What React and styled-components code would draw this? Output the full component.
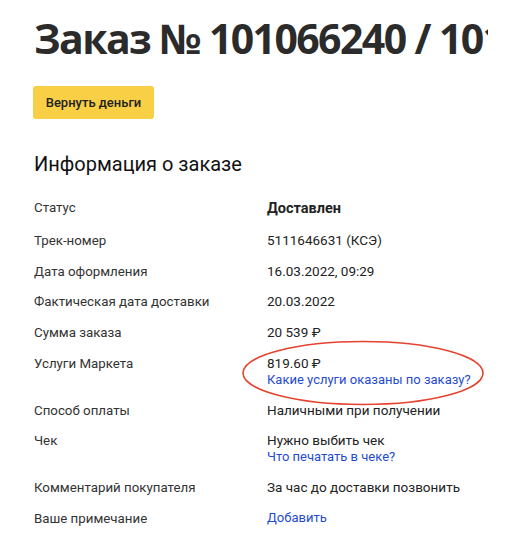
import styled, { createGlobalStyle } from 'styled-components';

const GlobalStyle = createGlobalStyle`
    body {
        margin: 0;
        background: #fff;
        font-family: Roboto, 'Noto Sans', sans-serif;
        color: #222;
    }
`;

const rows = [
    { label: 'Статус', value: 'Доставлен', bold: true },
    { label: 'Трек-номер', value: '5111646631 (КСЭ)' },
    { label: 'Дата оформления', value: '16.03.2022, 09:29' },
    { label: 'Фактическая дата доставки', value: '20.03.2022' },
    { label: 'Сумма заказа', value: '20 539 ₽' },
    {
        label: 'Услуги Маркета',
        value: '819.60 ₽',
        link: 'Какие услуги оказаны по заказу?',
        circled: true,
    },
    { label: 'Способ оплаты', value: 'Наличными при получении' },
    { label: 'Чек', value: 'Нужно выбить чек', link: 'Что печатать в чеке?' },
    { label: 'Комментарий покупателя', value: 'За час до доставки позвонить' },
    { label: 'Ваше примечание', link: 'Добавить' },
];

export default function App() {
    return (
        <Page>
            <GlobalStyle />
            <Title>Заказ № 101066240 / 101066241</Title>
            <RefundButton>Вернуть деньги</RefundButton>
            <Subtitle>Информация о заказе</Subtitle>
            <Table>
                {rows.map((row, i) => (
                    <Row key={i}>
                        <Label>{row.label}</Label>
                        <Value>
                            {row.value && (
                                <ValueText bold={row.bold}>{row.value}</ValueText>
                            )}
                            {row.link && <Link href="#">{row.link}</Link>}
                            {row.circled && (
                                <Ellipse viewBox="0 0 246 68">
                                    <ellipse
                                        cx="123"
                                        cy="34"
                                        rx="120"
                                        ry="31.5"
                                        fill="none"
                                        stroke="#e5432f"
                                        strokeWidth="1.6"
                                    />
                                </Ellipse>
                            )}
                        </Value>
                    </Row>
                ))}
            </Table>
        </Page>
    );
}

const Page = styled.main`
    width: 488px;
    height: 552px;
    overflow: hidden;
    padding: 0 0 0 34px;
    box-sizing: border-box;
`;

const Title = styled.h1`
    margin: 0;
    padding-top: 12px;
    font-family: 'Open Sans', sans-serif;
    font-size: 41px;
    line-height: 52px;
    font-weight: 700;
    color: #2b2b2b;
    white-space: nowrap;
    letter-spacing: -1.6px;
`;

const RefundButton = styled.button`
    display: block;
    margin-top: 22px;
    margin-left: -1px;
    width: 121px;
    height: 33px;
    border: none;
    border-radius: 3px;
    background: #f8cf45;
    color: #222;
    font-family: inherit;
    font-size: 13px;
    font-weight: 500;
    cursor: pointer;
`;

const Subtitle = styled.h2`
    margin: 33px 0 0;
    font-size: 20px;
    line-height: 24px;
    font-weight: 400;
    color: #111;
`;

const Table = styled.div`
    margin-top: 23px;
    display: flex;
    flex-direction: column;
    gap: 13.75px;
`;

const Row = styled.div`
    display: grid;
    grid-template-columns: 233px 1fr;
    align-items: start;
`;

const Label = styled.div`
    font-size: 13.3px;
    line-height: 17px;
    color: #333;
`;

const Value = styled.div`
    position: relative;
    display: flex;
    flex-direction: column;
`;

const ValueText = styled.span`
    font-size: ${(p) => (p.bold ? '14.5px' : '13.5px')};
    line-height: ${(p) => (p.bold ? '19px' : '17px')};
    font-weight: ${(p) => (p.bold ? 700 : 400)};
    color: #222;
`;

const Link = styled.a`
    font-size: 13px;
    line-height: 16px;
    color: #1f4bd1;
    text-decoration: none;
`;

const Ellipse = styled.svg`
    position: absolute;
    left: -27px;
    top: -16px;
    width: 246px;
    height: 68px;
    pointer-events: none;
`;
